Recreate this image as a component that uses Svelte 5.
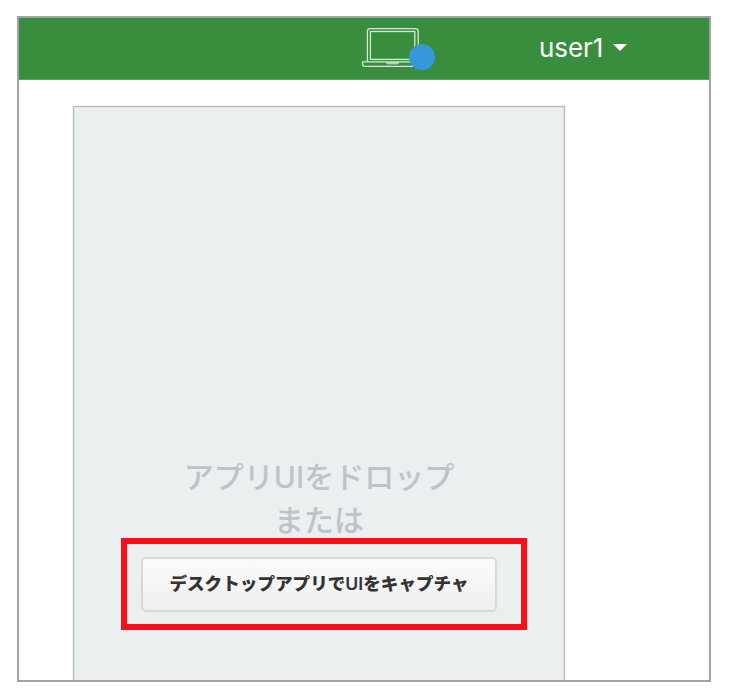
<script>
  const userName = 'user1';
</script>

<div class="page">
  <div class="frame">
    <header>
      <div class="device">
        <svg width="76" height="46" viewBox="0 0 76 46" fill="none" stroke="#d5e8d5" stroke-width="1.3">
          <path d="M7.4 41.5V11.4Q7.4 8.7 10.1 8.7H55.5Q58.2 8.7 58.2 11.4V41.5" />
          <rect x="10.4" y="11.5" width="44.4" height="27.9" />
          <path d="M2.5 41.8H62.5V44Q62.5 46.3 60 46.3H5Q2.5 46.3 2.5 44Z" />
          <path d="M26.2 42.8H38.8L37.5 43.8H27.5Z" stroke-width="1" />
          <circle cx="62" cy="37" r="13" fill="#3498db" stroke="none" />
        </svg>
      </div>
      <div class="user">
        <span class="name">{userName}</span>
        <span class="caret"></span>
      </div>
    </header>
    <main>
      <section class="drop">
        <p class="prompt">アプリ<span class="latin">UI</span>をドロップ<br />または</p>
        <div class="action">
          <button><span class="label">デスクトップアプリで<span class="latin">UI</span>をキャプチャ</span></button>
          <span class="highlight"></span>
        </div>
      </section>
    </main>
  </div>
</div>

<style>
  :global(body) { background: #fff; }
  .page {
    box-sizing: border-box;
    width: 734px;
    height: 694px;
    padding: 16px 23px 12px 17px;
    font-family: "Noto Sans CJK JP", sans-serif;
  }
  .frame {
    box-sizing: border-box;
    height: 666px;
    border: 2px solid #a3a3a3;
    overflow: hidden;
    display: flex;
    flex-direction: column;
  }
  header {
    box-sizing: border-box;
    height: 62px;
    flex: none;
    display: flex;
    background: #388e3c;
    border-bottom: 1px solid #5aa35e;
    padding-left: 341px;
  }
  .device { width: 76px; height: 50px; }
  .device svg { display: block; margin-top: 2px; overflow: visible; }
  .user {
    display: flex;
    align-items: center;
    margin-left: 103px;
    height: 60px;
    color: #fff;
    font: 26px/30px "Inter", sans-serif;
  }
  .name { letter-spacing: -0.1px; }
  .caret {
    margin-left: 10px;
    margin-top: -2px;
    border: 7px solid transparent;
    border-top-color: #fff;
    border-bottom: 0;
  }
  main { flex: 1; display: flex; padding: 26px 0 0 54px; min-height: 0; }
  .drop {
    box-sizing: border-box;
    width: 492px;
    margin-bottom: -3px;
    background: #ebeff0;
    border: 1px solid #b4bcc0;
    border-bottom: 0;
    box-shadow: 0 0 0 1px #f0f2f3, inset 0 0 0 1px #dce2e5;
    display: flex;
    flex-direction: column;
    align-items: center;
    padding-top: 347px;
  }
  .prompt {
    margin: 0;
    color: #bdc3c7;
    font-size: 30px;
    font-weight: 500;
    line-height: 43px;
    text-align: center;
    white-space: nowrap;
  }
  .latin { font-family: "Inter", sans-serif; line-height: 1; }
  .action { position: relative; margin-top: 17px; }
  button {
    box-sizing: border-box;
    display: flex;
    align-items: center;
    justify-content: center;
    width: 356px;
    height: 55px;
    padding: 0 0 3px;
    border: 2px solid #d8d8d8;
    border-radius: 5px;
    background: linear-gradient(#fcfcfc, #eee) border-box;
    color: #333;
    font: 900 17.6px/24px "Noto Sans CJK JP", sans-serif;
    white-space: nowrap;
  }
  button .latin { font-weight: 600; }
  .highlight {
    position: absolute;
    inset: -19px -30px -18px -20px;
    border: 6px solid #ff0d1b;
    pointer-events: none;
  }
</style>
